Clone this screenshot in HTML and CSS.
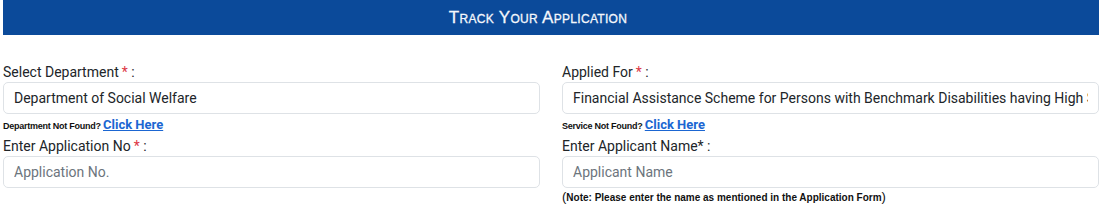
FILE: index.html
```html
<!DOCTYPE html>
<html lang="en">
<head>
  <meta charset="UTF-8">
  <title>Track Your Application</title>
  <link rel="stylesheet" href="styles.css">
</head>
<body>
<div class="track-header">Track Your Application</div>

<div class="track-form">
  <div class="field">
    <label class="field-label">Select Department<span class="req">*</span> :</label>
    <input type="text" class="field-input" value="Department of Social Welfare" readonly>
    <div class="field-help">Department Not Found? <a href="#">Click Here</a></div>
  </div>
  <div class="field">
    <label class="field-label">Applied For<span class="req">*</span> :</label>
    <input type="text" class="field-input" value="Financial Assistance Scheme for Persons with Benchmark Disabilities having High Support Needs" readonly>
    <div class="field-help">Service Not Found? <a href="#">Click Here</a></div>
  </div>
  <div class="field">
    <label class="field-label">Enter Application No<span class="req">*</span> :</label>
    <input type="text" class="field-input" placeholder="Application No.">
  </div>
  <div class="field">
    <label class="field-label">Enter Applicant Name* :</label>
    <input type="text" class="field-input" placeholder="Applicant Name">
    <div class="field-note"><span class="paren">(</span>Note: Please enter the name as mentioned in the Application Form<span class="paren">)</span></div>
  </div>
</div>
</body>
</html>
```

FILE: styles.css
```css
body {
  margin: 0;
  font-family: Roboto, "Liberation Sans", sans-serif;
  color: #212529;
  background: #fff;
}
.track-header {
  margin: 0 1px 0 3px;
  padding-right: 26px;
  height: 35px;
  line-height: 36px;
  background-color: #0b4a9a;
  color: #f4f7fc;
  text-align: center;
  font-family: "Liberation Sans", Arial, sans-serif;
  font-size: 17px;
  font-variant: small-caps;
  letter-spacing: 0.3px;
  -webkit-text-stroke: 0.3px #f4f7fc;
}
.track-form {
  display: grid;
  grid-template-columns: 1fr 1fr;
  column-gap: 22px;
  margin: 27px 1px 0 3px;
}
.field {
  display: flex;
  flex-direction: column;
}
.field-label {
  line-height: 20px;
  font-size: 14px;
}
.req {
  color: #dc3545;
  margin-left: 3px;
}
.field-input {
  box-sizing: border-box;
  width: 100%;
  height: 32px;
  padding: 0 10px;
  border: 1px solid #dee2e6;
  border-radius: 5px;
  font-family: Roboto, "Liberation Sans", sans-serif;
  font-size: 14px;
  color: #212529;
  background: #fff;
  outline: none;
}
.field-input::placeholder {
  color: #6c757d;
}
.field-help {
  height: 22px;
  line-height: 22px;
  font-family: "Liberation Sans", Arial, sans-serif;
  font-size: 9px;
  letter-spacing: -0.25px;
  font-weight: bold;
  color: #111;
}
.field-help a {
  font-family: Roboto, "Liberation Sans", sans-serif;
  font-size: 13px;
  letter-spacing: 0;
  color: #1b66d2;
}
.field-note {
  line-height: 18px;
  font-family: "Liberation Sans", Arial, sans-serif;
  font-size: 10px;
  font-weight: bold;
  color: #111;
}
.field-note .paren {
  font-size: 13px;
  font-weight: normal;
}
```
